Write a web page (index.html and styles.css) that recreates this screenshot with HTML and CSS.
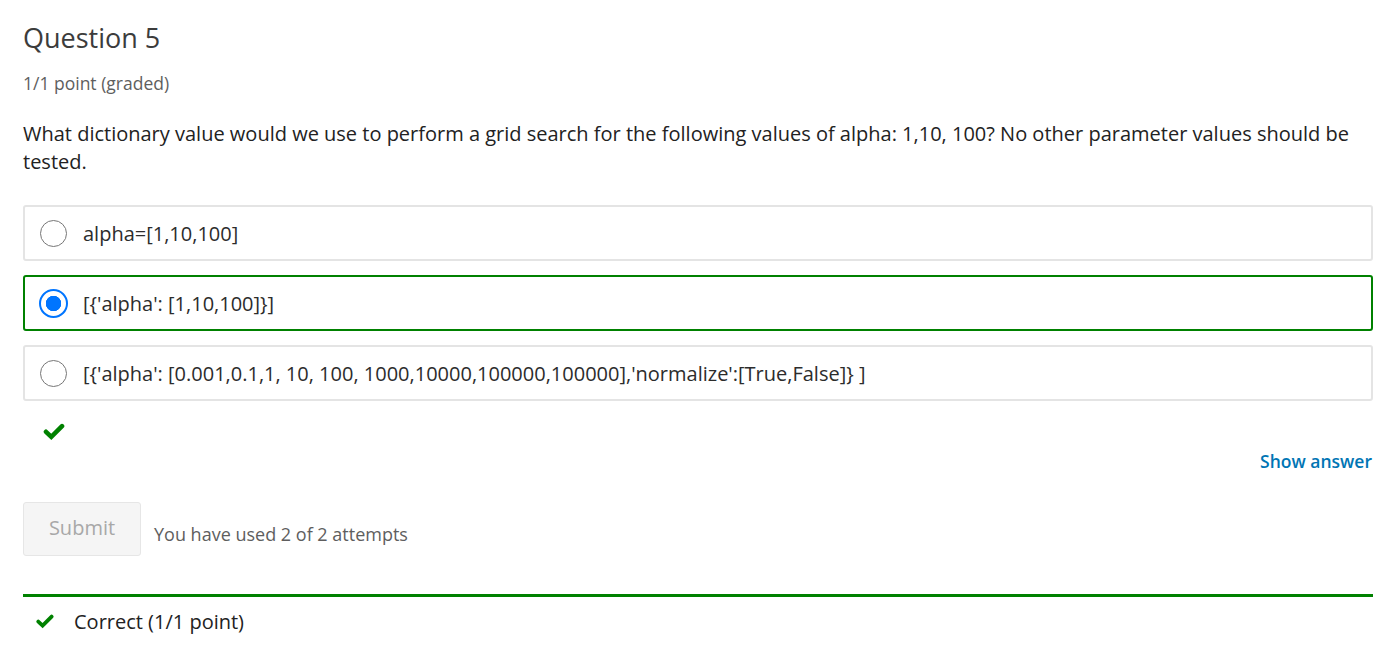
FILE: index.html
```html
<!DOCTYPE html>
<html>
<head>
<meta charset="utf-8">
<link rel="stylesheet" href="styles.css">
</head>
<body>
<div class="problem">
  <h3 class="title">Question 5</h3>
  <div class="points">1/1 point (graded)</div>
  <p class="prompt">What dictionary value would we use to perform a grid search for the following values of alpha: 1,10, 100? No other parameter values should be tested.</p>
  <div class="choices">
    <label class="choice"><span class="radio"></span><span class="choice-text">alpha=[1,10,100]</span></label>
    <label class="choice correct"><span class="radio checked"></span><span class="choice-text">[{'alpha': [1,10,100]}]</span></label>
    <label class="choice"><span class="radio"></span><span class="choice-text">[{'alpha': [0.001,0.1,1, 10, 100, 1000,10000,100000,100000],'normalize':[True,False]} ]</span></label>
  </div>
  <div class="status">
    <svg class="check" width="22" height="17" viewBox="0 0 22 17"><path d="M3 8.8 L8.3 13.8 L19 3.2" fill="none" stroke="#008100" stroke-width="4.6" stroke-linecap="round" stroke-linejoin="miter"/></svg>
  </div>
  <div class="show-row"><a class="show-answer">Show answer</a></div>
  <div class="action-row">
    <button class="submit">Submit</button>
    <span class="attempts">You have used 2 of 2 attempts</span>
  </div>
  <div class="notification">
    <svg class="check small" width="18" height="15" viewBox="0 0 18 15"><path d="M2.3 7.6 L6.6 11.6 L15.6 2.6" fill="none" stroke="#008100" stroke-width="3.8" stroke-linecap="round" stroke-linejoin="miter"/></svg>
    <span class="notif-text">Correct (1/1 point)</span>
  </div>
</div>
</body>
</html>
```
FILE: styles.css
```css
* { box-sizing: border-box; }
body {
  margin: 0;
  padding: 0 22px 0 23px;
  font-family: "Open Sans", sans-serif;
  color: #313131;
  background: #fff;
}
.problem { width: 1350px; }
.title {
  margin: 0;
  padding-top: 20px;
  font-size: 27px;
  font-weight: 400;
  line-height: 36px;
  color: #3c3c3c;
}
.points {
  margin-top: 15px;
  font-size: 17.5px;
  line-height: 24px;
  color: #5e5e5e;
}
.prompt {
  margin: 25px 0 0;
  font-size: 20px;
  line-height: 28px;
  color: #222;
}
.choices {
  margin-top: 29px;
  display: flex;
  flex-direction: column;
  gap: 14px;
}
.choice {
  display: flex;
  align-items: center;
  height: 56px;
  border: 2px solid #e4e4e4;
  border-radius: 3px;
  padding-left: 15px;
}
.choice.correct { border-color: #008100; }
.radio {
  width: 27px;
  height: 27px;
  border-radius: 50%;
  border: 1px solid #767676;
  flex: none;
  background: #fff;
}
.radio.checked {
  width: 29px;
  height: 29px;
  margin: 0 -1px 0 -1px;
  border: 2px solid #0075ff;
  background: radial-gradient(circle, #0075ff 0 7.5px, #fff 8px);
}
.choice-text {
  margin-left: 16px;
  font-size: 20px;
  color: #2c2c2c;
}
.status {
  height: 40px;
  padding-left: 20px;
  padding-top: 22px;
}
.check { display: block; }
.show-row {
  display: flex;
  justify-content: flex-end;
  margin-top: 8px;
}
.show-answer {
  font-size: 17.5px;
  font-weight: 600;
  line-height: 24px;
  color: #0075b4;
  padding-right: 1px;
}
.action-row {
  display: flex;
  align-items: center;
  margin-top: 29px;
}
.submit {
  width: 118px;
  height: 54px;
  font-family: "Open Sans", sans-serif;
  font-size: 20px;
  color: #a8a8a8;
  background: #f5f5f5;
  border: 1px solid #e6e6e6;
  border-radius: 3px;
  padding: 0 0 3px;
}
.attempts {
  margin-left: 13px;
  margin-top: 10px;
  font-size: 18px;
  color: #5e5e5e;
}
.notification {
  margin-top: 38px;
  border-top: 3px solid #008100;
  display: flex;
  align-items: center;
  padding: 11px 0 0 13px;
}
.notif-text {
  margin-left: 20px;
  font-size: 20px;
  color: #222;
}
```
